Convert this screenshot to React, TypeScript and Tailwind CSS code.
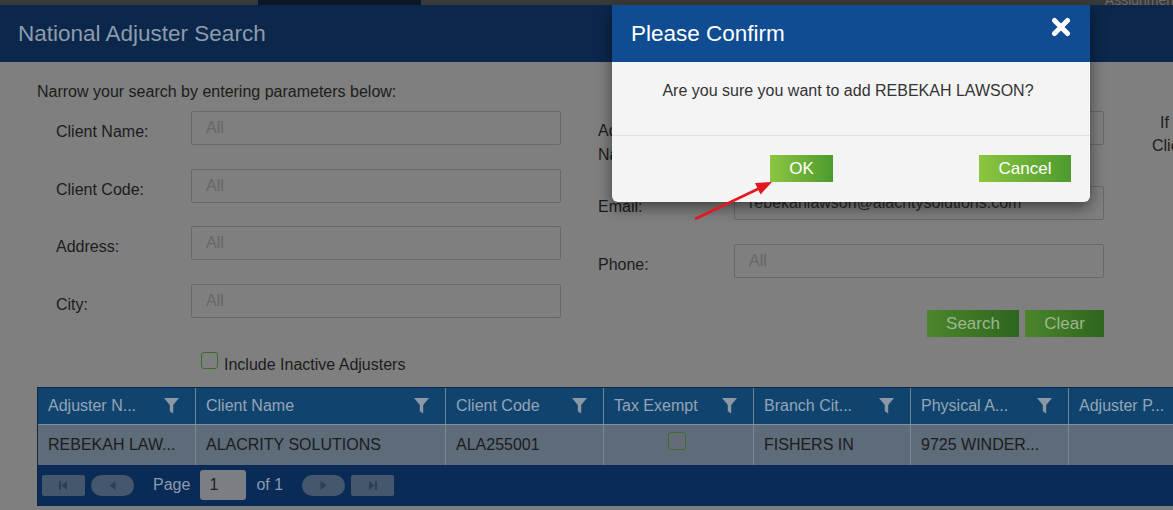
import React from 'react';

type Column = {
  title: string;
  width: string;
  value?: string;
  check?: boolean;
  filter?: boolean;
};

const COLUMNS: Column[] = [
  { title: 'Adjuster N...', width: 'w-[158px]', value: 'REBEKAH LAW...', filter: true },
  { title: 'Client Name', width: 'w-[250px]', value: 'ALACRITY SOLUTIONS', filter: true },
  { title: 'Client Code', width: 'w-[158px]', value: 'ALA255001', filter: true },
  { title: 'Tax Exempt', width: 'w-[150px]', check: true, filter: true },
  { title: 'Branch Cit...', width: 'w-[157px]', value: 'FISHERS IN', filter: true },
  { title: 'Physical A...', width: 'w-[158px]', value: '9725 WINDER...', filter: true },
  { title: 'Adjuster P...', width: 'w-[170px]', value: '' },
];

function FilterIcon() {
  return (
    <svg width="15" height="17" viewBox="0 0 15 17" className="shrink-0">
      <path d="M0 1 H15 L9.2 8 V16.5 L5.8 14.2 V8 Z" fill="#8c98a6" />
    </svg>
  );
}

function TextField({ value, placeholder = 'All' }: { value?: string; placeholder?: string }) {
  return (
    <div className="w-[370px] h-[34px] border border-[#686868] rounded-[2px] bg-[#7f7f7f] flex items-center pl-[14px] text-[16px]">
      {value ? (
        <span className="text-[#2a2a2a]">{value}</span>
      ) : (
        <span className="text-[#676767]">{placeholder}</span>
      )}
    </div>
  );
}

function LeftRow({ label }: { label: string }) {
  return (
    <div className="flex items-start">
      <label className="w-[135px] pt-[11px] leading-[20px] text-[16px] text-[#1c1c1c]">{label}</label>
      <TextField />
    </div>
  );
}

function PagerButton({ pill, children }: { pill?: boolean; children: React.ReactNode }) {
  return (
    <div
      className={
        pill
          ? 'w-[43px] h-[21px] rounded-full bg-[#45576d] flex items-center justify-center'
          : 'w-[43px] h-[21px] rounded-[2px] bg-[#45576d] flex items-center justify-center'
      }
    >
      {children}
    </div>
  );
}

export default function App() {
  return (
    <div className="relative w-[1173px] h-[510px] overflow-hidden bg-[#7f7f7f] font-['Liberation_Sans',Arial,sans-serif]">
      {/* top nav strip (cut off) */}
      <div className="flex h-[5px] bg-[#3a3a3a] overflow-hidden items-end">
        <div className="w-[258px]" />
        <div className="w-[163px] h-full bg-[#0b1628]" />
        <div className="flex-1" />
        <span className="mr-[-12px] text-[14px] leading-[10px] text-[#6f6a66] whitespace-nowrap">Assignments</span>
      </div>

      {/* page header */}
      <div className="h-[57px] bg-[#0b274c] flex items-center pl-[18px]">
        <h1 className="text-[22.5px] text-[#8e9bab]">National Adjuster Search</h1>
      </div>

      {/* search form */}
      <div className="pl-[37px] pt-[20px]">
        <p className="text-[16px] leading-[20px] text-[#1c1c1c]">Narrow your search by entering parameters below:</p>

        <div className="flex mt-[9px]">
          {/* left column */}
          <div className="flex flex-col pl-[19px] w-[561px]">
            <div className="flex flex-col gap-[23.5px]">
              <LeftRow label="Client Name:" />
              <LeftRow label="Client Code:" />
              <LeftRow label="Address:" />
              <LeftRow label="City:" />
            </div>
            <div className="flex items-start mt-[37px] pl-[145px]">
              <span className="w-[17px] h-[17px] -mt-[3px] rounded-[3px] border border-[#3c6b2c] bg-[#7f7f7f]" />
              <span className="ml-[6px] text-[16px] leading-[20px] text-[#1c1c1c]">Include Inactive Adjusters</span>
            </div>
          </div>

          {/* right column */}
          <div className="flex flex-col ml-[37px]">
            <div className="flex items-start h-[75px]">
              <label className="w-[136px] pt-[8px] leading-[24px] text-[16px] text-[#1c1c1c]">
                Adjuster
                <br />
                Name:
              </label>
              <TextField />
            </div>
            <div className="flex items-start">
              <label className="w-[136px] pt-[11px] leading-[20px] text-[16px] text-[#1c1c1c]">Email:</label>
              <TextField value="rebekahlawson@alacritysolutions.com" />
            </div>
            <div className="flex items-start mt-[24px]">
              <label className="w-[136px] pt-[11px] leading-[20px] text-[16px] text-[#1c1c1c]">Phone:</label>
              <TextField />
            </div>
            <div className="flex justify-end gap-[6px] mt-[32px]">
              <button className="w-[92px] h-[27px] bg-linear-to-r from-[#4c852b] to-[#2d661d] text-[17px] text-[#9db890]">
                Search
              </button>
              <button className="w-[79px] h-[27px] bg-linear-to-r from-[#4c852b] to-[#2d661d] text-[17px] text-[#9db890]">
                Clear
              </button>
            </div>
          </div>

          {/* help text (cut off by the window edge) */}
          <div className="ml-[48px] text-[16px] leading-[23px] text-[#1c1c1c] whitespace-nowrap">
            <div className="pl-[8px]">If the adjuster</div>
            <div>Client</div>
          </div>
        </div>

        {/* results grid */}
        <div className="mt-[12px] w-[1200px] border-l border-t border-[#0c2843]">
          <div className="flex h-[37px] bg-[#10446f] border-b border-[#7d8fa0]">
            {COLUMNS.map((col, i) => (
              <div
                key={i}
                className={`${col.width} shrink-0 flex items-center justify-between pl-[10px] pr-[16px] border-r border-[#6f859a] text-[16px] text-[#95a4b4] whitespace-nowrap`}
              >
                <span>{col.title}</span>
                {col.filter && <FilterIcon />}
              </div>
            ))}
          </div>
          <div className="flex h-[40px] bg-[#5e6b79]">
            {COLUMNS.map((col, i) => (
              <div
                key={i}
                className={`${col.width} shrink-0 flex items-center pl-[10px] border-r border-[#7d8896] text-[16px] text-[#1c1c1c] whitespace-nowrap`}
              >
                {col.check ? (
                  <span className="ml-[54px] w-[18px] h-[18px] -mt-[8px] rounded-[3px] border border-[#3d6b2e] bg-[#646d77]" />
                ) : (
                  col.value
                )}
              </div>
            ))}
          </div>
          <div className="flex items-center h-[41px] bg-[#0a2b55] pl-[4px]">
            <PagerButton>
              <svg width="9" height="9" viewBox="0 0 9 9">
                <rect x="0" y="0" width="2" height="9" fill="#2e3f55" />
                <path d="M8 0 V9 L2.5 4.5 Z" fill="#2e3f55" />
              </svg>
            </PagerButton>
            <div className="ml-[6px]">
              <PagerButton pill>
                <svg width="7" height="9" viewBox="0 0 7 9">
                  <path d="M6.5 0 V9 L0.5 4.5 Z" fill="#2e3f55" />
                </svg>
              </PagerButton>
            </div>
            <span className="ml-[19px] text-[16px] text-[#8d9ab0]">Page</span>
            <div className="ml-[10px] w-[46px] h-[30px] rounded-[3px] bg-[#7b7e83] flex items-center pl-[9px] text-[16px] text-[#1f1f1f]">
              1
            </div>
            <span className="ml-[10px] text-[16px] text-[#8d9ab0]">of 1</span>
            <div className="ml-[19px]">
              <PagerButton pill>
                <svg width="7" height="9" viewBox="0 0 7 9">
                  <path d="M0.5 0 V9 L6.5 4.5 Z" fill="#2e3f55" />
                </svg>
              </PagerButton>
            </div>
            <div className="ml-[6px]">
              <PagerButton>
                <svg width="9" height="9" viewBox="0 0 9 9">
                  <path d="M1 0 V9 L6.5 4.5 Z" fill="#2e3f55" />
                  <rect x="7" y="0" width="2" height="9" fill="#2e3f55" />
                </svg>
              </PagerButton>
            </div>
          </div>
        </div>
      </div>

      {/* confirm dialog */}
      <div className="absolute left-[612px] top-[5px] w-[478px] rounded-b-[6px] bg-[#f4f4f4] shadow-[0_5px_15px_rgba(0,0,0,0.5)]">
        <div className="h-[57px] bg-[#104c91] flex items-center justify-between pl-[19px] pr-[19px]">
          <h2 className="text-[22.5px] text-white">Please Confirm</h2>
          <svg width="20" height="20" viewBox="0 0 20 20" className="self-start mt-[12px]">
            <path d="M3.5 3.5 L16.5 16.5 M16.5 3.5 L3.5 16.5" stroke="#ffffff" strokeWidth="5" strokeLinecap="round" />
          </svg>
        </div>
        <div className="h-[74px] pt-[19px] pr-[6px] border-b border-[#e1e1e1] text-center text-[16px] leading-[20px] text-[#333333]">
          Are you sure you want to add REBEKAH LAWSON?
        </div>
        <div className="grid grid-cols-2 pt-[19px] pb-[20px]">
          <div className="flex justify-end pr-[18px]">
            <button className="w-[63px] h-[27px] bg-linear-to-r from-[#8dc63f] to-[#4b9b2f] text-[17px] text-white">
              OK
            </button>
          </div>
          <div className="flex justify-end pr-[19px]">
            <button className="w-[92px] h-[27px] bg-linear-to-r from-[#8dc63f] to-[#4b9b2f] text-[17px] text-white">
              Cancel
            </button>
          </div>
        </div>
      </div>

      {/* red annotation arrow */}
      <svg className="absolute inset-0 pointer-events-none" width="1173" height="510" viewBox="0 0 1173 510">
        <line x1="695" y1="219" x2="760" y2="188" stroke="#e3171f" strokeWidth="2.5" />
        <path d="M772 182 L760.5 194.5 L755 183 Z" fill="#e3171f" />
      </svg>
    </div>
  );
}
